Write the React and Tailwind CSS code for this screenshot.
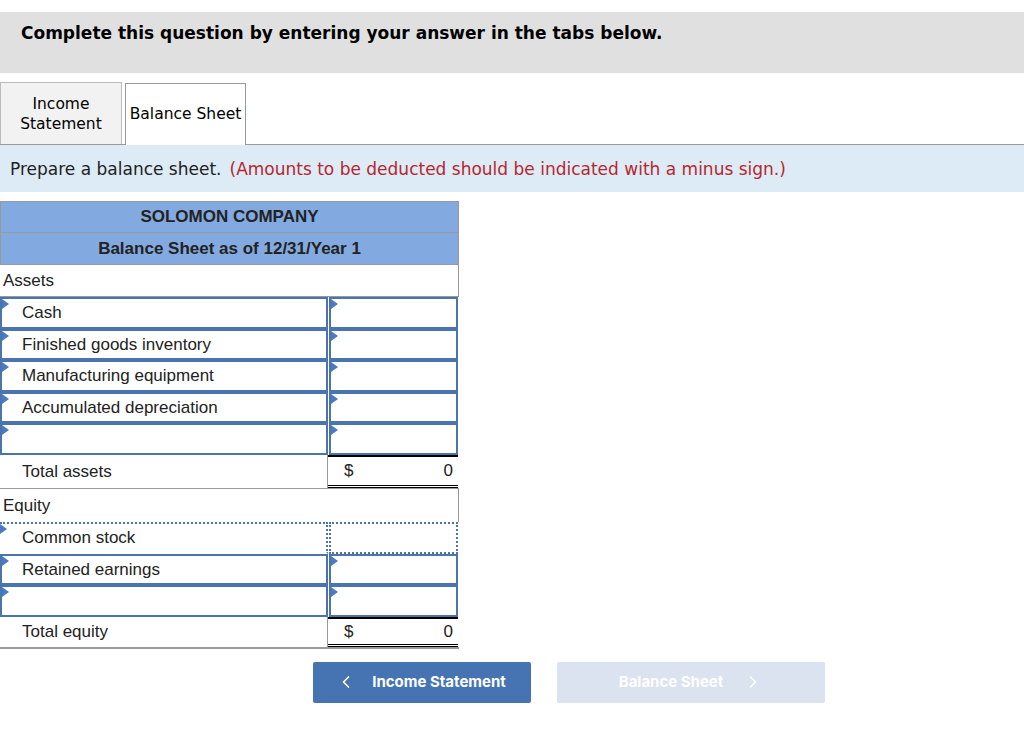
import { ChevronLeft, ChevronRight } from "lucide-react"

const verdana = { fontFamily: '"DejaVu Sans", Verdana, sans-serif' }

function Tri() {
    return (
        <span className="absolute left-0 top-0 h-0 w-0 border-y-[5px] border-l-[7px] border-y-transparent border-l-[#4a7ac0]" />
    )
}

function InputRow({ label, focus }) {
    return (
        <div className="grid h-[31.6px] grid-cols-[328px_130px]">
            <div
                className={
                    "relative flex items-center " +
                    (focus
                        ? "border-t-2 border-r-2 border-dotted border-t-[#4a73b0] border-r-[#4a73b0] border-b-2 border-b-white pl-[22px]"
                        : "border-2 border-[#4a73b0] pl-[20px]")
                }
            >
                <Tri />
                {label}
            </div>
            <div
                className={
                    "relative ml-[1px] " +
                    (focus ? "border-2 border-dotted border-[#4a73b0]" : "border-2 border-[#4a73b0]")
                }
            >
                {!focus && <Tri />}
            </div>
        </div>
    )
}

function TotalRow({ label, last }) {
    return (
        <div className={"grid grid-cols-[328px_130px] " + (last ? "h-[32px] border-b-2 border-[#999]" : "h-[33px]")}>
            <div className="flex items-center border-r border-[#999] pl-[22px]">{label}</div>
            <div className="flex items-center justify-between border-t-2 border-b-[3px] border-double border-t-black border-b-black pr-[5px] pl-[16px]">
                <span>$</span>
                <span>0</span>
            </div>
        </div>
    )
}

function SectionRow({ label }) {
    return (
        <div className="flex h-[32px] items-center border-r border-b border-[#999] pl-[3px]">{label}</div>
    )
}

export default function App() {
    return (
        <div className="min-h-[747px] w-[1024px] bg-white pt-[12px] text-black">
            <div className="h-[61px] bg-[#e0e0e0] pl-[21px] pt-[9px] text-[17px] font-bold" style={verdana}>
                Complete this question by entering your answer in the tabs below.
            </div>

            <div className="mt-[10px] flex h-[62px] items-end border-b border-[#999]" style={verdana}>
                <div className="flex h-[62px] w-[122px] items-center justify-center border border-b-0 border-[#bbb] bg-[#f2f2f2] text-center text-[15.5px] leading-[20px]">
                    Income
                    <br />
                    Statement
                </div>
                <div className="relative top-[1px] ml-[3px] flex h-[62px] w-[121px] items-center justify-center border border-b-0 border-[#999] bg-white text-[15.5px]">
                    Balance Sheet
                </div>
            </div>

            <div className="flex h-[47px] items-center bg-[#ddebf7] pl-[10px] pt-[3px] text-[17px] text-[#222]" style={verdana}>
                Prepare a balance sheet.
                <span className="ml-[8px] text-[#b5272d]">(Amounts to be deducted should be indicated with a minus sign.)</span>
            </div>

            <div className="mt-[9px] w-[459px] text-[17px] text-[#222]" style={{ fontFamily: '"Liberation Sans", Arial, sans-serif' }}>
                <div className="flex h-[32px] items-center justify-center border border-[#999] bg-[#82aae0] font-bold">
                    SOLOMON COMPANY
                </div>
                <div className="flex h-[32px] items-center justify-center border border-t-0 border-[#999] bg-[#82aae0] font-bold">
                    Balance Sheet as of 12/31/Year 1
                </div>
                <SectionRow label="Assets" />
                <InputRow label="Cash" />
                <InputRow label="Finished goods inventory" />
                <InputRow label="Manufacturing equipment" />
                <InputRow label="Accumulated depreciation" />
                <InputRow label="" />
                <div className="border-b border-[#999]">
                    <TotalRow label="Total assets" />
                </div>
                <div className="flex h-[33px] items-center border-r border-[#999] pl-[3px]">Equity</div>
                <InputRow label="Common stock" focus />
                <InputRow label="Retained earnings" />
                <InputRow label="" />
                <TotalRow label="Total equity" last />
            </div>

            <div className="mt-[13px] flex gap-[26px] pl-[313px]" style={{ fontFamily: "Inter, Roboto, sans-serif" }}>
                <button className="flex h-[41px] w-[218px] items-center justify-center gap-[16px] rounded-[2px] bg-[#4673b2] pr-[2px] text-[15px] font-bold text-white">
                    <ChevronLeft size={20} strokeWidth={2} />
                    Income Statement
                </button>
                <button className="flex h-[41px] w-[268px] items-center justify-center gap-[20px] rounded-[2px] bg-[#dae3ef] text-[15px] font-bold text-white">
                    Balance Sheet
                    <ChevronRight size={20} strokeWidth={2} />
                </button>
            </div>
        </div>
    )
}
